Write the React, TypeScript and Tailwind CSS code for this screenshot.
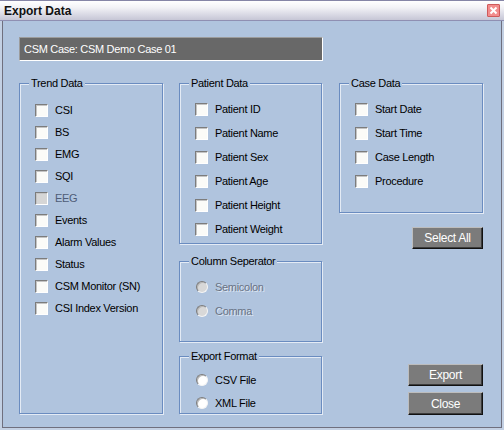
import clsx from 'clsx';

const FONT = "font-['Liberation_Sans',Arial,sans-serif]";

const TREND = ['CSI', 'BS', 'EMG', 'SQI', 'EEG', 'Events', 'Alarm Values', 'Status', 'CSM Monitor (SN)', 'CSI Index Version'];
const PATIENT = ['Patient ID', 'Patient Name', 'Patient Sex', 'Patient Age', 'Patient Height', 'Patient Weight'];
const CASE = ['Start Date', 'Start Time', 'Case Length', 'Procedure'];

function Check({ disabled }: { disabled?: boolean }) {
  return (
    <span
      className={clsx(
        'w-[13px] h-[13px] shrink-0 border border-t-[#7c7c7c] border-l-[#7c7c7c] border-b-white border-r-white shadow-[inset_1px_1px_0_#c4c4c4]',
        disabled ? 'bg-[#d6d6d6]' : 'bg-[#fbfbf8]'
      )}
    />
  );
}

function Radio({ disabled }: { disabled?: boolean }) {
  return (
    <span
      className={clsx(
        'w-[12px] h-[12px] shrink-0 rounded-full border border-t-[#7c7c7c] border-l-[#7c7c7c] border-b-[#f4f4f4] border-r-[#f4f4f4] shadow-[inset_1px_1px_0_#b8b8b8]',
        disabled ? 'bg-[#d8d8d8]' : 'bg-white'
      )}
    />
  );
}

function Group({ title, className, children }: { title: string; className?: string; children: React.ReactNode }) {
  return (
    <div
      className={clsx(
        'relative border border-[#6a8cc0] shadow-[1px_1px_0_#e4ebf5,inset_1px_1px_0_#e4ebf5]',
        className
      )}
    >
      <span className="absolute top-[-7px] left-[9px] px-[2px] bg-[#b0c4de] leading-[13px] whitespace-nowrap">
        {title}
      </span>
      {children}
    </div>
  );
}

function Button({ label, className }: { label: string; className?: string }) {
  return (
    <button
      className={clsx(
        'flex items-center justify-center bg-[#7b7b7b] text-white text-[12px] border border-t-[#bdbdbd] border-l-[#bdbdbd] border-b-[#111] border-r-[#111] shadow-[inset_-1px_-1px_0_#3c3c3c]',
        className
      )}
    >
      {label}
    </button>
  );
}

const disabledText = 'text-[#687284] [text-shadow:1px_1px_0_#dfe7f2]';

export default function App() {
  return (
    <div className={clsx('w-[504px] h-[430px] flex flex-col bg-[#c3d0e3] text-[11px] text-black tracking-[-0.3px] overflow-hidden', FONT)}>
      {/* title bar */}
      <div className="h-[21px] shrink-0 flex items-center justify-between pl-[4px] pr-[4px] border-t border-[#8585a6] border-b border-b-[#8f8fb2] bg-[linear-gradient(#ffffff,#f2f2f6_35%,#c6c6d6)]">
        <span className="font-bold text-[12px] tracking-normal text-[#111]">Export Data</span>
        <span className="w-[13px] h-[13px] flex items-center justify-center bg-[#f28c8c] border border-[#cf5a5a] rounded-[1px]">
          <svg width="9" height="9" viewBox="0 0 9 9">
            <path d="M1.5 1.5L7.5 7.5M7.5 1.5L1.5 7.5" stroke="white" strokeWidth="2" />
          </svg>
        </span>
      </div>

      {/* body */}
      <div className="flex-1 px-[2px] pb-[2px]">
        <div className="h-full border-x border-b border-[#6f6f7e] bg-[#b0c4de] pl-[16px] pt-[16px]">
          <div className="w-[304px] h-[24px] flex items-center pl-[4px] bg-[#686868] border border-t-[#9c9c9c] border-l-[#9c9c9c] border-b-white border-r-white text-white text-[11px] tracking-[-0.3px]">
            CSM Case: CSM Demo Case 01
          </div>

          <div className="flex mt-[22px]">
            {/* column 1 */}
            <Group title="Trend Data" className="w-[144px] h-[331px] pt-[20px] pl-[15px]">
              <div className="flex flex-col gap-[9px]">
                {TREND.map((t) => (
                  <div key={t} className="h-[13px] flex items-center gap-[7px] leading-[13px] whitespace-nowrap">
                    <Check disabled={t === 'EEG'} />
                    <span className={t === 'EEG' ? 'text-[#4e5c76]' : ''}>{t}</span>
                  </div>
                ))}
              </div>
            </Group>

            {/* column 2 */}
            <div className="ml-[16px] w-[143px] flex flex-col">
              <Group title="Patient Data" className="h-[161px] pt-[19px] pl-[15px]">
                <div className="flex flex-col gap-[11px]">
                  {PATIENT.map((t) => (
                    <div key={t} className="h-[13px] flex items-center gap-[7px] leading-[13px] whitespace-nowrap">
                      <Check />
                      <span>{t}</span>
                    </div>
                  ))}
                </div>
              </Group>
              <Group title="Column Seperator" className="mt-[17px] h-[81px] pt-[19px] pl-[16px]">
                <div className="flex flex-col gap-[12px]">
                  {['Semicolon', 'Comma'].map((t) => (
                    <div key={t} className="h-[12px] flex items-center gap-[7px] leading-[13px]">
                      <Radio disabled />
                      <span className={disabledText}>{t}</span>
                    </div>
                  ))}
                </div>
              </Group>
              <Group title="Export Format" className="mt-[14px] h-[58px] pt-[17px] pl-[16px]">
                <div className="flex flex-col gap-[11px]">
                  {['CSV File', 'XML File'].map((t) => (
                    <div key={t} className="h-[12px] flex items-center gap-[7px] leading-[13px]">
                      <Radio />
                      <span>{t}</span>
                    </div>
                  ))}
                </div>
              </Group>
            </div>

            {/* column 3 */}
            <div className="ml-[17px] w-[144px] flex flex-col items-end">
              <Group title="Case Data" className="self-stretch h-[130px] pt-[19px] pl-[15px]">
                <div className="flex flex-col gap-[11px]">
                  {CASE.map((t) => (
                    <div key={t} className="h-[13px] flex items-center gap-[7px] leading-[13px] whitespace-nowrap">
                      <Check />
                      <span>{t}</span>
                    </div>
                  ))}
                </div>
              </Group>
              <Button label="Select All" className="mt-[14px] w-[71px] h-[22px]" />
              <Button label="Export" className="mt-[115px] w-[75px] h-[22px]" />
              <Button label="Close" className="mt-[6px] w-[75px] h-[23px]" />
            </div>
          </div>
        </div>
      </div>
    </div>
  );
}
